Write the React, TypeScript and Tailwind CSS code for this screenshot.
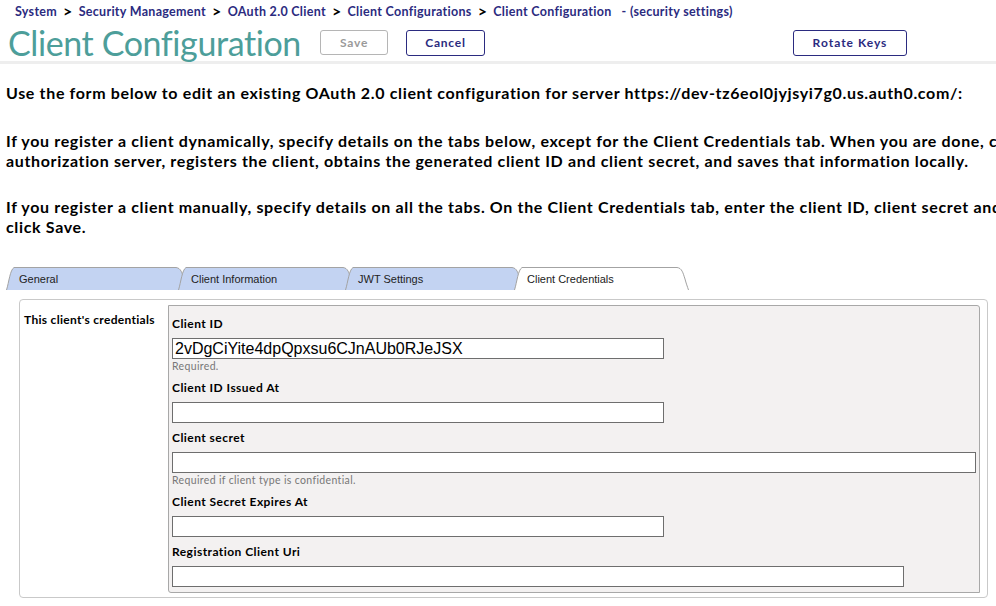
import React from "react";

const futura = { fontFamily: "Lato, 'Noto Sans', sans-serif" } as React.CSSProperties;

function Tab({ label, width, active, first }: { label: string; width: number; active?: boolean; first?: boolean }) {
  const h = 23;
  const w = width;
  const d = `M0.5 ${h} C3 ${h - 8} 4 3 8 0.5 L${w - 12} 0.5 C${w - 7} 1 ${w - 6} 6 ${w - 4} 12 C${w - 3} 16 ${w - 1.5} 20 ${w - 0.5} ${h}`;
  return (
    <div className={`relative h-[23px] ${first ? "" : "-ml-[10px]"}`} style={{ width: w }}>
      <svg className="absolute inset-0" width={w} height={h} viewBox={`0 0 ${w} ${h}`}>
        <path d={d + " Z"} fill={active ? "#ffffff" : "#c3d3f2"} stroke="none" />
        <path d={d} fill="none" stroke="#a3a3a3" strokeWidth="1" />
      </svg>
      <span className="relative block pl-[13px] pt-[5px] text-[11px] leading-[14px] text-[#222]" style={{ fontFamily: "'Liberation Sans', Arial, sans-serif" }}>
        {label}
      </span>
    </div>
  );
}

function Label({ children }: { children: React.ReactNode }) {
  return <div className="text-[12px] font-bold text-black leading-[14px] tracking-[0.45px]">{children}</div>;
}

function Input({ w, value }: { w: number; value?: string }) {
  return (
    <div
      className="h-[21px] border border-[#6e6e6e] bg-white text-[16px] leading-[19px] pl-[2px] text-black"
      style={{ width: w, fontFamily: "'Liberation Sans', Arial, sans-serif" }}
    >
      {value}
    </div>
  );
}

function Hint({ children }: { children: React.ReactNode }) {
  return <div className="text-[10.5px] leading-[12px] text-[#777] mt-[1px] tracking-[0.35px]">{children}</div>;
}

function Sep() {
  return <span className="text-black text-[16px] font-bold mx-[6px] leading-[14px] relative -top-[1px]">&gt;</span>;
}

export default function App() {
  return (
    <div className="w-[996px] h-[606px] overflow-hidden bg-white" style={futura}>
      {/* breadcrumb */}
      <div className="pl-[15px] pt-[4px] h-[20px] flex items-center text-[12.5px] font-bold text-[#2b2b80] whitespace-nowrap tracking-[0.3px]">
        <span>System</span>
        <Sep />
        <span>Security Management</span>
        <Sep />
        <span>OAuth 2.0 Client</span>
        <Sep />
        <span>Client Configurations</span>
        <Sep />
        <span>Client Configuration</span>
        <span className="ml-[10px]">- (security settings)</span>
      </div>
      {/* title row */}
      <div className="flex items-center h-[44px] pl-[8px] border-b-[3px] border-[#eeeeee]">
        <div className="mt-[4px] text-[34px] leading-[40px] text-[#4d9e9a] font-normal w-[312px] whitespace-nowrap tracking-[-0.4px]">Client Configuration</div>
        <button className="mt-[4px] w-[68px] h-[25px] rounded-[3px] border border-[#b5b5b5] text-[12px] font-bold text-[#9a9a9a] tracking-[0.8px]">
          Save
        </button>
        <button className="mt-[4px] ml-[18px] w-[79px] h-[26px] rounded-[3px] border border-[#2b2b80] text-[12px] font-bold text-[#2b2b80] tracking-[0.8px]">
          Cancel
        </button>
        <button className="mt-[4px] ml-[308px] w-[114px] h-[26px] rounded-[3px] border border-[#2b2b80] text-[12px] font-bold text-[#2b2b80] tracking-[1px]">
          Rotate Keys
        </button>
      </div>
      {/* paragraphs */}
      <div className="w-[1400px] pl-[6px] pt-[19px] text-[16px] font-bold text-black leading-[20px] tracking-[0.65px] whitespace-nowrap">
        <p>Use the form below to edit an existing OAuth 2.0 client configuration for server https://dev-tz6eol0jyjsyi7g0.us.auth0.com/:</p>
        <p className="mt-[28px]">
          If you register a client dynamically, specify details on the tabs below, except for the Client Credentials tab. When you are done, click Save. The system contacts the
          <br />
          authorization server, registers the client, obtains the generated client ID and client secret, and saves that information locally.
        </p>
        <p className="mt-[26px]">
          If you register a client manually, specify details on all the tabs. On the Client Credentials tab, enter the client ID, client secret and other details, then
          <br />
          click Save.
        </p>
      </div>
      {/* tabs */}
      <div className="flex pl-[6px] mt-[30px]">
        <Tab label="General" width={182} first />
        <Tab label="Client Information" width={177} />
        <Tab label="JWT Settings" width={179} />
        <Tab label="Client Credentials" width={175} active />
      </div>
      {/* panel */}
      <div className="ml-[19px] mt-[9px] w-[969px] h-[299px] border border-[#c9c9c9] rounded-[4px] flex pt-[5px]">
        <div className="w-[148px] pl-[4px] pt-[8px] text-[12px] font-bold leading-[14px] tracking-[0.3px] whitespace-nowrap">This client&apos;s credentials</div>
        <div className="w-[812px] h-[288px] border border-[#a8a8a8] rounded-tr-[3px] rounded-bl-[3px] bg-[#f3f1f1] pl-[3px] pt-[11px]">
          <Label>Client ID</Label>
          <div className="mt-[7px]">
            <Input w={492} value="2vDgCiYite4dpQpxsu6CJnAUb0RJeJSX" />
          </div>
          <Hint>Required.</Hint>
          <div className="mt-[9px]">
            <Label>Client ID Issued At</Label>
          </div>
          <div className="mt-[7px]">
            <Input w={492} />
          </div>
          <div className="mt-[8px]">
            <Label>Client secret</Label>
          </div>
          <div className="mt-[7px]">
            <Input w={804} />
          </div>
          <Hint>Required if client type is confidential.</Hint>
          <div className="mt-[9px]">
            <Label>Client Secret Expires At</Label>
          </div>
          <div className="mt-[7px]">
            <Input w={492} />
          </div>
          <div className="mt-[8px]">
            <Label>Registration Client Uri</Label>
          </div>
          <div className="mt-[7px]">
            <Input w={732} />
          </div>
        </div>
      </div>
    </div>
  );
}
